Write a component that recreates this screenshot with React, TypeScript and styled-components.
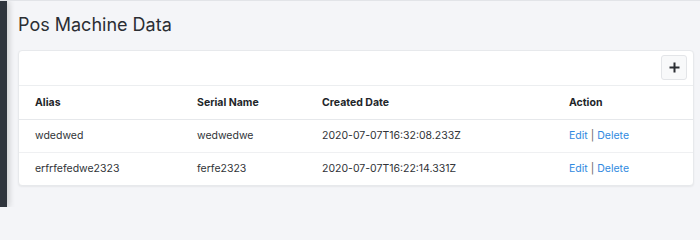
import React from "react";
import styled, { createGlobalStyle } from "styled-components";

const Global = createGlobalStyle`
  html, body { margin: 0; padding: 0; height: 207px; overflow: hidden; }
  body { font-family: Inter, "Liberation Sans", sans-serif; background: #f4f5f8; }
  *, *::before, *::after { box-sizing: border-box; }
`;

const Shell = styled.div`
  display: flex;
  height: 207px;
  overflow: hidden;
  border-top: 1px solid #e2e4e8;
`;

const Sidebar = styled.aside`
  width: 7px;
  flex: none;
  background: #2f353d;
  box-shadow: 2px 0 6px rgba(0, 0, 0, 0.18);
  z-index: 1;
`;

const Main = styled.main`
  flex: 1;
  background: #f4f5f8;
  padding: 0 6px 0 11px;
`;

const Title = styled.h1`
  margin: 0;
  padding-top: 12px;
  font-size: 18px;
  line-height: 23px;
  font-weight: 400;
  color: #2b2e33;
`;

const Card = styled.section`
  margin-top: 14px;
  background: #fff;
  border: 1px solid #e7e9ec;
  border-radius: 4px;
  box-shadow: 0 1px 2px rgba(0, 0, 0, 0.06);
`;

const Toolbar = styled.div`
  display: flex;
  justify-content: flex-end;
  padding: 4px 6px 5px;
  border-bottom: 1px solid #eceef0;
`;

const IconButton = styled.button`
  width: 26px;
  height: 25px;
  display: flex;
  align-items: center;
  justify-content: center;
  padding: 0;
  background: #f8f9fa;
  border: 1px solid #e3e5e8;
  border-radius: 3px;
  cursor: pointer;
`;

const Table = styled.table`
  width: 100%;
  border-collapse: collapse;
  table-layout: fixed;
  font-size: 10.5px;
  color: #333;
`;

const Th = styled.th<{ $w?: number }>`
  width: ${(p) => (p.$w ? `${p.$w}px` : "auto")};
  text-align: left;
  font-weight: 700;
  color: #222529;
  padding: 0 0 0 16px;
  height: 33px;
  border-bottom: 1px solid #e6e8eb;
`;

const Td = styled.td`
  padding: 0 0 0 16px;
  height: 33px;
  text-align: left;
  color: #303337;
`;

const Row = styled.tr<{ $last?: boolean }>`
  border-bottom: ${(p) => (p.$last ? "none" : "1px solid #eff0f2")};
`;

const Link = styled.a`
  color: #3089e0;
  text-decoration: none;
  cursor: pointer;
`;

const Sep = styled.span`
  color: #666;
  margin: 0 3px;
`;

const rows = [
  { alias: "wdedwed", serial: "wedwedwe", created: "2020-07-07T16:32:08.233Z" },
  { alias: "erfrfefedwe2323", serial: "ferfe2323", created: "2020-07-07T16:22:14.331Z" },
];

export default function App() {
  return (
    <>
      <Global />
      <Shell>
        <Sidebar />
        <Main>
          <Title>Pos Machine Data</Title>
          <Card>
            <Toolbar>
              <IconButton aria-label="Add">
                <svg width="11" height="11" viewBox="0 0 11 11">
                  <path d="M5.5 0.5v10M0.5 5.5h10" stroke="#2b2e33" strokeWidth="2" />
                </svg>
              </IconButton>
            </Toolbar>
            <Table>
              <thead>
                <tr>
                  <Th $w={162}>Alias</Th>
                  <Th $w={125}>Serial Name</Th>
                  <Th $w={247}>Created Date</Th>
                  <Th>Action</Th>
                </tr>
              </thead>
              <tbody>
                {rows.map((r, i) => (
                  <Row key={r.alias} $last={i === rows.length - 1}>
                    <Td>{r.alias}</Td>
                    <Td>{r.serial}</Td>
                    <Td>{r.created}</Td>
                    <Td>
                      <Link>Edit</Link>
                      <Sep>|</Sep>
                      <Link>Delete</Link>
                    </Td>
                  </Row>
                ))}
              </tbody>
            </Table>
          </Card>
        </Main>
      </Shell>
    </>
  );
}
